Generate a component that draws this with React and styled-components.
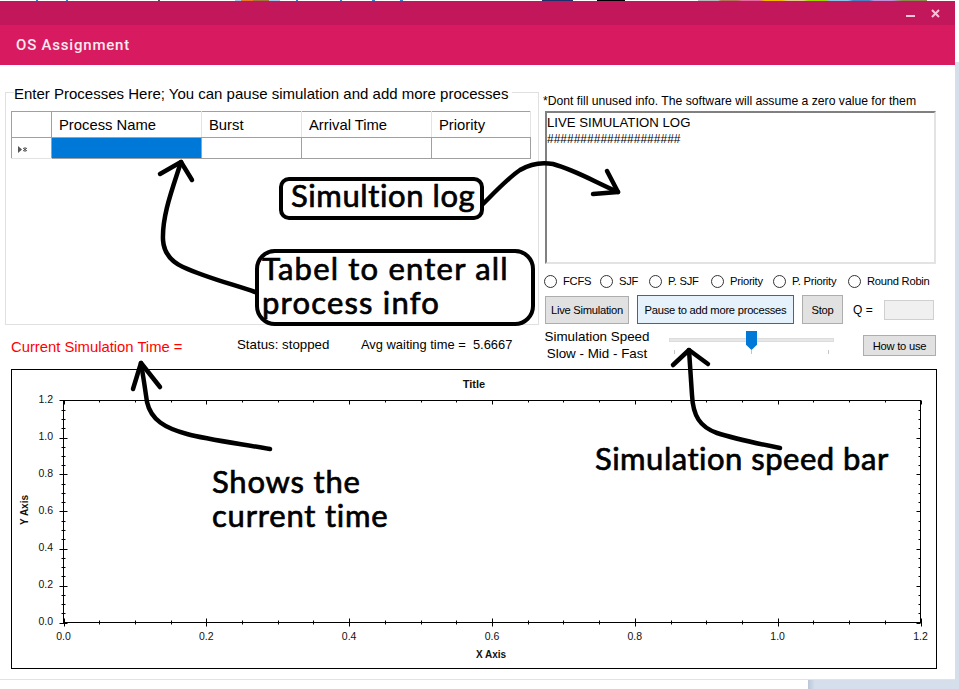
import styled, { createGlobalStyle } from "styled-components";

const GlobalStyle = createGlobalStyle`
  html, body {
    margin: 0;
    padding: 0;
    overflow: hidden;
    background: #d5dfec;
  }
`;

const UI_FONT = `"Liberation Sans", Arial, sans-serif`;
const HAND_FONT = `Lato, "Open Sans", sans-serif`;

const Page = styled.div`
  position: relative;
  width: 959px;
  height: 689px;
  display: flex;
  flex-direction: column;
  font-family: ${UI_FONT};
  color: #000;
  background: #d5dfec;
`;

// 1px of the desktop peeking above the window
const DesktopEdge = styled.div`
  height: 1px;
  flex: none;
  background: linear-gradient(
    to right,
    #fff 0 36px, #3b7fc4 36px 38px, #fff 38px 66px, #3b7fc4 66px 68px, #fff 68px 158px,
    #555 158px 160px, #fff 160px 235px, #a9c6e8 235px 241px, #e8762c 241px 253px, #a5733c 253px 269px,
    #a9c6e8 269px 280px, #fff 280px 296px, #3b7fc4 296px 298px, #fff 298px 340px, #3b7fc4 340px 342px,
    #fff 342px 372px, #3b7fc4 372px 375px, #fff 375px 400px, #3b7fc4 400px 403px, #fff 403px 542px,
    #1e2f6b 542px 573px, #fff 573px 597px, #000 597px 625px, #fff 625px 698px,
    #b9b9b9 698px 718px, #b5735a 721px 737px, #e86a9c 742px 760px, #f5b800 765px 782px,
    #e8c88c 787px 803px, #a4d400 809px 825px, #8cc4e8 830px 848px, #4f7fc0 853px 869px,
    #c090d8 874px 892px, #8a8a50 902px 927px, #fff 927px
  );
`;

const MainRow = styled.div`
  flex: none;
  height: 679px;
  display: flex;
`;

const SideCap = styled.div`
  width: 4px;
  height: 61px;
  background: #fff;
`;

const BottomEdge = styled.div`
  flex: 1;
  background: linear-gradient(to right, #fff 0 808px, #b9c6da 808px, #d5dfec 815px);
`;

const Window = styled.div`
  width: 955px;
  height: 679px;
  background: #fff;
  border-bottom: 1px solid #e2e2e2;
  box-sizing: border-box;
  display: flex;
  flex-direction: column;
`;

const TitleBar = styled.div`
  height: 24px;
  flex: none;
  background: #c2185b;
  display: flex;
  justify-content: flex-end;
  align-items: center;
  gap: 16px;
  padding-right: 15px;
`;

const AppBar = styled.div`
  box-sizing: border-box;
  height: 40px;
  flex: none;
  background: #d81b60;
  display: flex;
  align-items: center;
  padding: 0 0 1px 16px;
  color: #fbeaf0;
  font-family: Roboto, sans-serif;
  font-weight: 500;
  font-size: 15px;
  letter-spacing: 0.8px;
`;

const TopRow = styled.div`
  display: flex;
  height: 260px;
  flex: none;
  padding-left: 5px;
`;

const GroupBox = styled.fieldset`
  box-sizing: border-box;
  width: 534px;
  height: 244px;
  margin: 16px 0 0;
  padding: 7px 7px 0 5px;
  border: 1px solid #e0e0e0;
  min-inline-size: 0;
`;

const GroupTitle = styled.legend`
  padding: 2px 4px 0 0;
  margin-left: 3px;
  font-size: 15px;
  line-height: 21px;
  white-space: nowrap;
`;

const Grid = styled.table`
  width: 519px;
  table-layout: fixed;
  border-collapse: collapse;
  border: 1px solid #a0a0a0;
`;

const HeadCell = styled.th`
  height: 24px;
  padding: 1px 0 0 7px;
  text-align: left;
  font-weight: 400;
  font-size: 14.8px;
  border-right: 1px solid #e3e3e3;
  border-bottom: 1px solid #a0a0a0;
`;

const RowHead = styled.td`
  box-sizing: border-box;
  height: 21px;
  padding: 2px 0 0 6px;
  border-right: 1px solid #a0a0a0;
  border-bottom: 1px solid #e3e3e3;
  line-height: 0;
`;

const Cell = styled.td`
  box-sizing: border-box;
  height: 21px;
  padding: 0;
  border-right: 1px solid #a0a0a0;
  border-bottom: 1px solid #a0a0a0;
  background: ${({ $selected }) => ($selected ? "#0078d7" : "#fff")};
`;

const SideColumn = styled.div`
  width: 393px;
  margin-left: 4px;
  display: flex;
  flex-direction: column;
`;

const Note = styled.div`
  margin-top: 29px;
  height: 14px;
  line-height: 14px;
  font-size: 12.2px;
  white-space: nowrap;
`;

const LogBox = styled.div`
  box-sizing: border-box;
  width: 391px;
  height: 153px;
  margin: 3px 0 0 2px;
  padding: 2px 0 0;
  border: 2px solid #e3e3e3;
  border-top-color: #808080;
  border-left-color: #808080;
  font-size: 13.2px;
  line-height: 16px;
`;

const LogRule = styled.div`
  font-size: 12px;
  line-height: 16px;
`;

const RadioRow = styled.div`
  display: flex;
  margin: 10px 0 0 1px;
  height: 14px;
`;

const RadioItem = styled.label`
  width: ${({ $width }) => $width}px;
  flex: none;
  display: flex;
  align-items: center;
  gap: 6px;
  font-size: 11.2px;
  letter-spacing: -0.25px;
  white-space: nowrap;
`;

const RadioDot = styled.span`
  box-sizing: border-box;
  width: 13px;
  height: 13px;
  border: 1px solid #333;
  border-radius: 50%;
  background: #fff;
  flex: none;
`;

const ButtonRow = styled.div`
  display: flex;
  align-items: center;
  height: 29px;
  margin: 7px 0 0 2px;
`;

const Button = styled.button`
  box-sizing: border-box;
  width: ${({ $width }) => $width}px;
  height: ${({ $height }) => $height}px;
  margin-left: ${({ $gap }) => $gap || 0}px;
  padding: 0;
  font-family: ${UI_FONT};
  font-size: 11.2px;
  letter-spacing: -0.25px;
  color: #000;
  white-space: nowrap;
  background: ${({ $active }) => ($active ? "#e5f1fb" : "#e1e1e1")};
  border: ${({ $active }) => ($active ? "1px solid #0078d7" : "1px solid #adadad")};
`;

const QLabel = styled.span`
  margin-left: 10px;
  width: 31px;
  font-size: 12px;
`;

const QInput = styled.div`
  box-sizing: border-box;
  width: 50px;
  height: 20px;
  background: #f0f0f0;
  border: 1px solid #d0d0d0;
`;

const StatusRow = styled.div`
  display: flex;
  align-items: flex-start;
  flex: none;
  height: 44px;
  padding-left: 11px;
`;

const CurrentTime = styled.div`
  width: 226px;
  margin-top: 14px;
  line-height: 16px;
  font-size: 14.8px;
  color: #f00;
  white-space: nowrap;
`;

const StatusText = styled.div`
  width: ${({ $width }) => $width}px;
  margin-top: 12px;
  line-height: 16px;
  font-size: ${({ $size }) => $size}px;
  white-space: pre;
`;

const SpeedLabel = styled.div`
  width: 106px;
  margin-top: 4px;
  text-align: center;
  font-size: 13.4px;
  line-height: 16.5px;
  white-space: nowrap;
`;

const Slider = styled.div`
  position: relative;
  width: 165px;
  height: 29px;
  margin: 6px 0 0 19px;
`;

const SliderTrack = styled.div`
  box-sizing: border-box;
  position: absolute;
  top: 7px;
  left: 0;
  right: 0;
  height: 4px;
  background: #e7e7e7;
  border: 1px solid #dcdcdc;
`;

const SliderThumb = styled.div`
  position: absolute;
  top: 0;
  left: 77px;
  width: 11px;
  height: 19px;
  background: #0078d7;
  clip-path: polygon(0 0, 100% 0, 100% 72%, 50% 100%, 0 72%);
`;

const SliderTicks = styled.div`
  position: absolute;
  top: 19px;
  left: 5px;
  right: 5px;
  display: flex;
  justify-content: space-between;
`;

const SliderTick = styled.span`
  width: 1px;
  height: 4px;
  background: #c4c4c4;
`;

const HelpButton = styled(Button)`
  margin-top: 10px;
`;

const ChartFrame = styled.div`
  box-sizing: border-box;
  width: 926px;
  height: 300px;
  margin-left: 11px;
  border: 1px solid #000;
  flex: none;
`;

const ChartSvg = styled.svg`
  display: block;
  text {
    font-family: ${UI_FONT};
    font-size: 10.5px;
    fill: #111;
  }
  text.bold {
    font-weight: 700;
  }
`;

// hand drawn notes pasted on top of the screenshot
const Scribbles = styled.svg`
  position: absolute;
  inset: 0;
  pointer-events: none;
`;

const Callout = styled.div`
  position: absolute;
  box-sizing: border-box;
  left: ${({ $x }) => $x}px;
  top: ${({ $y }) => $y}px;
  width: ${({ $w }) => $w}px;
  height: ${({ $h }) => $h}px;
  border: 4px solid #000;
  border-radius: ${({ $r }) => $r}px;
  background: #fff;
`;

const HandText = styled.div`
  position: absolute;
  left: ${({ $x }) => $x}px;
  top: ${({ $y }) => $y}px;
  font-family: ${HAND_FONT};
  font-size: 31px;
  letter-spacing: ${({ $spacing }) => $spacing}px;
  line-height: 33.5px;
  color: #000;
  -webkit-text-stroke: 0.7px #000;
  white-space: pre;
`;

const columns = [
  { name: "Process Name", width: 150 },
  { name: "Burst", width: 100 },
  { name: "Arrival Time", width: 130 },
  { name: "Priority", width: 99 },
];

const radios = [
  { label: "FCFS", width: 56 },
  { label: "SJF", width: 49 },
  { label: "P. SJF", width: 62 },
  { label: "Priority", width: 62 },
  { label: "P. Priority", width: 75 },
  { label: "Round Robin", width: 85 },
];

const PLOT = { left: 51.5, right: 908.5, top: 30.5, bottom: 252.5 };
const xAt = (v) => PLOT.left + (v / 1.2) * (PLOT.right - PLOT.left);
const yAt = (v) => PLOT.bottom - (v / 1.2) * (PLOT.bottom - PLOT.top);
const ticks = Array.from({ length: 25 }, (_, i) => i * 0.05);
const isMajor = (i) => i % 4 === 0;

const Chart = () => (
  <ChartSvg width="924" height="298" viewBox="0 0 924 298">
    <text className="bold" x="462" y="18" textAnchor="middle" style={{ fontSize: 11 }}>
      Title
    </text>
    <rect
      x={PLOT.left}
      y={PLOT.top}
      width={PLOT.right - PLOT.left}
      height={PLOT.bottom - PLOT.top}
      fill="none"
      stroke="#000"
    />
    {ticks.map((v, i) => {
      const x = Math.round(xAt(v)) + 0.5;
      const y = Math.round(yAt(v)) + 0.5;
      const major = isMajor(i);
      return (
        <g key={i} stroke="#000" strokeWidth="1">
          <line x1={x} x2={x} y1={PLOT.bottom - (major ? 4 : 2)} y2={PLOT.bottom + (major ? 4 : 2)} />
          <line x1={x} x2={x} y1={PLOT.top} y2={PLOT.top + (major ? 4 : 2)} />
          <line y1={y} y2={y} x1={PLOT.left - (major ? 4 : 2)} x2={PLOT.left + (major ? 4 : 2)} />
          <line y1={y} y2={y} x1={PLOT.right - (major ? 4 : 2)} x2={PLOT.right} />
        </g>
      );
    })}
    {ticks.filter((_, i) => isMajor(i)).map((v) => (
      <g key={v}>
        <text x={xAt(v)} y="270" textAnchor="middle">{v.toFixed(1)}</text>
        <text x="41" y={yAt(v) + 2.5} textAnchor="end">{v.toFixed(1)}</text>
      </g>
    ))}
    <text className="bold" x="479" y="288" textAnchor="middle" style={{ fontSize: 10 }}>
      X Axis
    </text>
    <text
      className="bold"
      textAnchor="middle"
      transform="translate(16 140) rotate(-90)"
      style={{ fontSize: 10 }}
    >
      Y Axis
    </text>
  </ChartSvg>
);

const Arrows = () => (
  <Scribbles width="959" height="689" viewBox="0 0 959 689" fill="none" stroke="#000" strokeWidth="4.5" strokeLinecap="round" strokeLinejoin="round">
    <path d="M255 292 C232 284 207 278 183 267 C172 262 164 254 163 240 C162 216 172 190 181 162" />
    <path d="M160 174 L181 162 L192 180" />
    <path d="M482 205 C497 190 508 178 520 170 C530 164 542 162 553 164 C575 170 595 182 618 192" />
    <path d="M607 171 L618 192 L593 194" />
    <path d="M780 448 C750 442 735 439 717 433 C700 427 693 416 692 395 L689 350" />
    <path d="M673 365 L689 350 L708 364" />
    <path d="M270 449 C235 443 205 439 187 434 C165 428 151 420 147 402 C145 388 143 375 141 363" />
    <path d="M133 389 L141 363 L160 387" />
  </Scribbles>
);

export default function App() {
  return (
    <Page>
      <GlobalStyle />
      <DesktopEdge />
      <MainRow>
        <Window>
          <TitleBar>
            <svg width="9" height="9" viewBox="0 0 9 9">
              <rect x="0" y="6" width="9" height="2" fill="#f3c6d8" />
            </svg>
            <svg width="9" height="9" viewBox="0 0 9 9">
              <path d="M1 1 L8 8 M8 1 L1 8" stroke="#f3c6d8" strokeWidth="2" />
            </svg>
          </TitleBar>
          <AppBar>OS Assignment</AppBar>
          <TopRow>
            <GroupBox>
              <GroupTitle>Enter Processes Here; You can pause simulation and add more processes</GroupTitle>
              <Grid>
                <colgroup>
                  <col style={{ width: 40 }} />
                  {columns.map((c) => (
                    <col key={c.name} style={{ width: c.width }} />
                  ))}
                </colgroup>
                <thead>
                  <tr>
                    <HeadCell style={{ borderRightColor: "#a0a0a0" }} />
                    {columns.map((c) => (
                      <HeadCell key={c.name}>{c.name}</HeadCell>
                    ))}
                  </tr>
                </thead>
                <tbody>
                  <tr>
                    <RowHead>
                      <svg width="12" height="7" viewBox="0 0 12 7">
                        <path d="M0 0 L4 3.5 L0 7 Z" fill="#555" />
                        <path d="M7 1 V6 M5 2 L9 5 M9 2 L5 5" stroke="#555" strokeWidth="1" fill="none" />
                      </svg>
                    </RowHead>
                    {columns.map((c, i) => (
                      <Cell key={c.name} $selected={i === 0} />
                    ))}
                  </tr>
                </tbody>
              </Grid>
            </GroupBox>
            <SideColumn>
              <Note>*Dont fill unused info. The software will assume a zero value for them</Note>
              <LogBox>
                LIVE SIMULATION LOG
                <LogRule>####################</LogRule>
              </LogBox>
              <RadioRow>
                {radios.map((r) => (
                  <RadioItem key={r.label} $width={r.width}>
                    <RadioDot />
                    {r.label}
                  </RadioItem>
                ))}
              </RadioRow>
              <ButtonRow>
                <Button $width={84} $height={28}>Live Simulation</Button>
                <Button $width={157} $height={29} $gap={8} $active>Pause to add more processes</Button>
                <Button $width={41} $height={29} $gap={8}>Stop</Button>
                <QLabel>Q =</QLabel>
                <QInput />
              </ButtonRow>
            </SideColumn>
          </TopRow>
          <StatusRow>
            <CurrentTime>Current Simulation Time =</CurrentTime>
            <StatusText $width={124} $size={13.3}>Status: stopped</StatusText>
            <StatusText $width={183} $size={12.9}>{"Avg waiting time =  5.6667"}</StatusText>
            <SpeedLabel>
              Simulation Speed
              <br />
              Slow - Mid - Fast
            </SpeedLabel>
            <Slider>
              <SliderTrack />
              <SliderThumb />
              <SliderTicks>
                <SliderTick />
                <SliderTick />
                <SliderTick />
              </SliderTicks>
            </Slider>
            <HelpButton $width={73} $height={21} $gap={29}>How to use</HelpButton>
          </StatusRow>
          <ChartFrame>
            <Chart />
          </ChartFrame>
        </Window>
        <SideCap />
      </MainRow>
      <BottomEdge />

      <Arrows />
      <Callout $x={279} $y={177} $w={205} $h={43} $r={10} />
      <HandText $x={291} $y={179} $spacing={0.6}>Simultion log</HandText>
      <Callout $x={255} $y={249} $w={280} $h={77} $r={20} />
      <HandText $x={262} $y={252} $spacing={1.2}>{"Tabel to enter all\nprocess info"}</HandText>
      <HandText $x={212} $y={465} $spacing={0.8}>{"Shows the\ncurrent time"}</HandText>
      <HandText $x={595} $y={442} $spacing={0.5}>Simulation speed bar</HandText>
    </Page>
  );
}
